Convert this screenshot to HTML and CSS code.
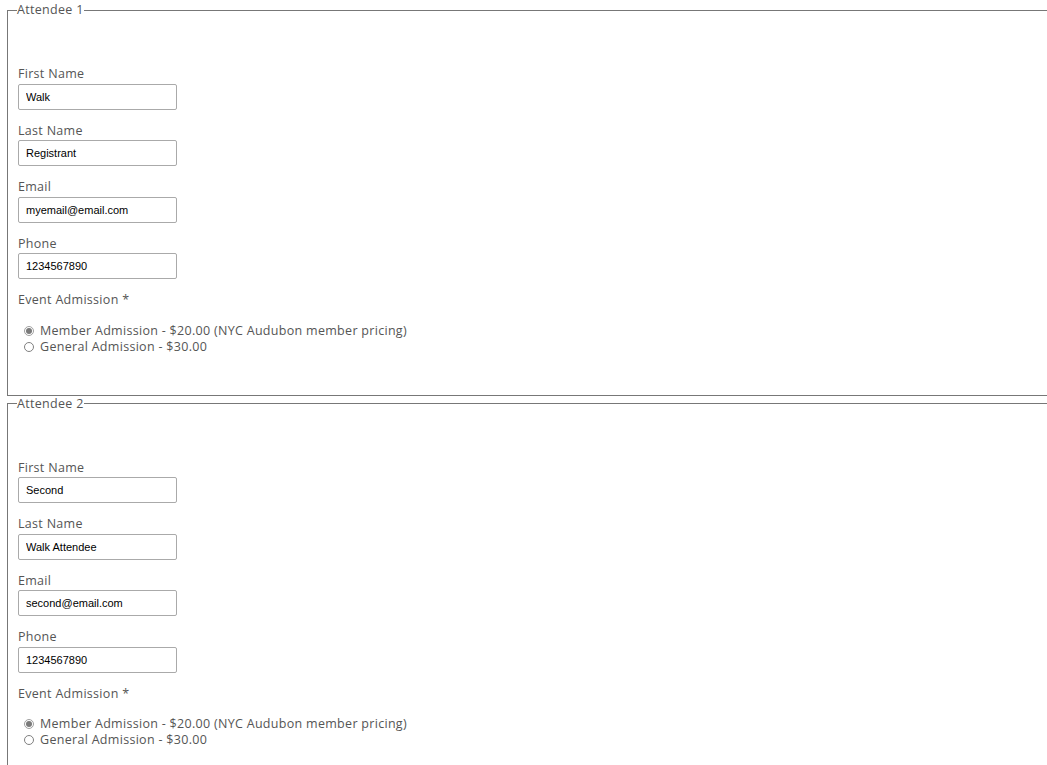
FILE: index.html
```html
<!DOCTYPE html>
<html lang="en">
<head>
<meta charset="utf-8">
<title>Attendees</title>
<link rel="stylesheet" href="styles.css">
</head>
<body>
<form class="form">
  <fieldset class="attendee">
    <legend class="attendee-title">Attendee 1</legend>
    <div class="field">
      <label class="field-label">First Name</label>
      <input class="field-input" type="text" value="Walk">
    </div>
    <div class="field">
      <label class="field-label">Last Name</label>
      <input class="field-input" type="text" value="Registrant">
    </div>
    <div class="field">
      <label class="field-label">Email</label>
      <input class="field-input" type="text" value="myemail@email.com">
    </div>
    <div class="field">
      <label class="field-label">Phone</label>
      <input class="field-input" type="text" value="1234567890">
    </div>
    <div class="choice-group">
      <div class="field-label">Event Admission *</div>
      <ul class="choices">
        <li class="choice"><input class="radio" type="radio" name="adm1" checked><span>Member Admission - $20.00 (NYC Audubon member pricing)</span></li>
        <li class="choice"><input class="radio" type="radio" name="adm1"><span>General Admission - $30.00</span></li>
      </ul>
    </div>
  </fieldset>
  <fieldset class="attendee">
    <legend class="attendee-title">Attendee 2</legend>
    <div class="field">
      <label class="field-label">First Name</label>
      <input class="field-input" type="text" value="Second">
    </div>
    <div class="field">
      <label class="field-label">Last Name</label>
      <input class="field-input" type="text" value="Walk Attendee">
    </div>
    <div class="field">
      <label class="field-label">Email</label>
      <input class="field-input" type="text" value="second@email.com">
    </div>
    <div class="field">
      <label class="field-label">Phone</label>
      <input class="field-input" type="text" value="1234567890">
    </div>
    <div class="choice-group">
      <div class="field-label">Event Admission *</div>
      <ul class="choices">
        <li class="choice"><input class="radio" type="radio" name="adm2" checked><span>Member Admission - $20.00 (NYC Audubon member pricing)</span></li>
        <li class="choice"><input class="radio" type="radio" name="adm2"><span>General Admission - $30.00</span></li>
      </ul>
    </div>
  </fieldset>
</form>
</body>
</html>
```

FILE: styles.css
```css
html, body {
  margin: 0;
  padding: 0;
  background: #ffffff;
}

body {
  font-family: "Open Sans", "Liberation Sans", sans-serif;
  font-size: 12.5px;
  letter-spacing: 0.3px;
  color: #555555;
}

.form {
  padding-top: 2px;
}

.attendee {
  min-width: 0;
  margin: 0 0 0 7px;
  padding: 47px 10px 40px 9px;
  border: 1px solid #777777;
  border-right: none;
}

.attendee-title {
  padding: 0;
  margin: 0;
  line-height: 16px;
  color: #555555;
}

.field {
  margin: 0 0 12px 1px;
}

.field-label {
  display: block;
  line-height: 17.5px;
  margin-bottom: 1px;
}

.field-input {
  display: block;
  box-sizing: border-box;
  width: 159px;
  height: 26px;
  margin: 0;
  padding: 0 7px;
  border: 1px solid #aaaaaa;
  border-radius: 2px;
  font-family: "Liberation Sans", Arial, sans-serif;
  font-size: 11px;
  letter-spacing: 0;
  color: #000000;
  background: #ffffff;
}

.choice-group {
  margin-left: 1px;
}

.choices {
  list-style: none;
  margin: 14px 0 0 0;
  padding: 0 0 0 6px;
}

.choice {
  display: flex;
  align-items: center;
  gap: 6px;
  line-height: 16px;
}

.radio {
  appearance: none;
  -webkit-appearance: none;
  flex: none;
  width: 10px;
  height: 10px;
  margin: 0;
  border: 1px solid #808080;
  border-radius: 50%;
  box-sizing: border-box;
  display: grid;
  place-items: center;
  background: #ffffff;
}

.radio:checked {
  border-color: #a0a0a0;
}

.radio:checked::before {
  content: "";
  width: 6px;
  height: 6px;
  border-radius: 50%;
  background: #7a7a7a;
}
```
